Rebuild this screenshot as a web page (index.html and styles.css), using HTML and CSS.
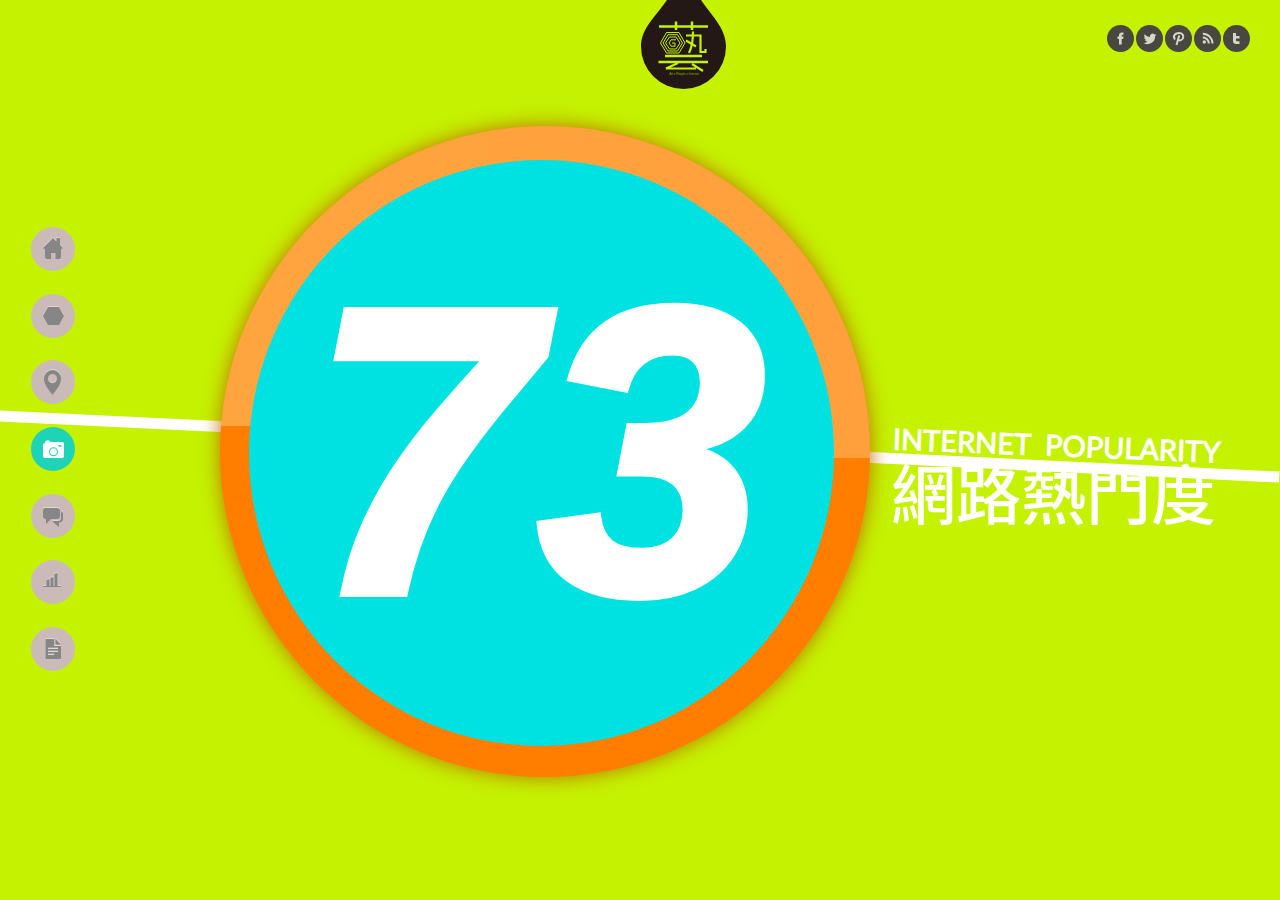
FILE: index.html
```html
<!DOCTYPE html>
<html lang="zh-Hant">
<head>
<meta charset="utf-8">
<title>網路熱門度</title>
<link rel="stylesheet" href="styles.css">
</head>
<body>
<div class="page">
  <div class="slash"></div>
  <header class="top">
    <a class="logo" href="#" aria-label="藝">
      <svg viewBox="0 0 86 90">
        <path d="M26 0H60C70 15 85 28 85 46.500A42.500 42.500 0 0 1 0 46.500C0 28 16 15 26 0Z" fill="#231815"/>
        <g fill="none" stroke="#c4f200" stroke-width="2.200">
          <path d="M18 26.500H67M35 21.500V30M51 21.500V30" stroke-width="2.500"/>
          <path d="M24 56H61M17.500 62H67" stroke-width="2.500"/>
          <path d="M37 63L25 68.500H55M51 64L62 71"/>
          <path d="M45 35.500H59.500V52H64.500V49M52 31.500C52 42 51 47 48 53M45 40.500L55 46.500"/>
        </g>
        <g fill="none" stroke="#c4f200" stroke-width="1">
          <path d="M19.500 43L25.500 32.500H38L44 43L38 53H25.500Z"/>
          <path d="M22 43L27 34.700H36.500L41.500 43L36.500 51H27Z"/>
          <path d="M24.500 43L28.500 37H35L39 43L35 49H28.500Z"/>
          <path d="M35 39.800H30L28 43L30 46.200H34V43H31"/>
        </g>
      </svg>
      <span class="tagline">Art x People x Internet</span>
    </a>
    <nav class="social" aria-label="Social">
      <a href="#" aria-label="Facebook"><svg viewBox="0 0 27 27"><path d="M12 19.500V14H10.500V11.500H12V10.500C12 8.500 13 7.500 15 7.500H16.500V9.800H15.500Q14.700 9.800 14.700 10.600V11.500H16.500L16.200 14H14.700V19.500Z"/></svg></a>
      <a href="#" aria-label="Twitter"><svg viewBox="0 0 24 24" class="bird"><path d="M23 5a9 9 0 0 1-2.500.700 4.500 4.500 0 0 0 2-2.500 9 9 0 0 1-2.900 1.100 4.500 4.500 0 0 0-7.700 4.100A12.800 12.800 0 0 1 2.600 3.700a4.500 4.500 0 0 0 1.400 6 4.500 4.500 0 0 1-2-.600 4.500 4.500 0 0 0 3.600 4.500 4.500 4.500 0 0 1-2 .1 4.500 4.500 0 0 0 4.200 3.100A9 9 0 0 1 1 18.700 12.800 12.800 0 0 0 20.700 7.300 9 9 0 0 0 23 5z"/></svg></a>
      <a href="#" aria-label="Pinterest"><svg viewBox="0 0 27 27"><path class="stroke" d="M10 14.500C7.500 11 10 8 14 8C17.500 8 19 10.500 18 13C17 16 13.500 16 13 14M14.200 10.500L11.500 20"/></svg></a>
      <a href="#" aria-label="RSS"><svg viewBox="0 0 27 27"><circle cx="10.300" cy="17" r="1.700"/><path class="stroke" d="M8.800 12.500A6 6 0 0 1 14.800 18.500M8.800 8.800A9.700 9.700 0 0 1 18.500 18.500"/></svg></a>
      <a href="#" aria-label="Tumblr"><svg viewBox="0 0 27 27"><path d="M10 8H13V11H16.500V13.500H13V15.300Q13 16.300 14 16.300H16.500V19H13Q10 19 10 16Z"/></svg></a>
    </nav>
  </header>
  <main class="stage">
    <nav class="side" aria-label="Sections">
      <a href="#" aria-label="Home"><svg viewBox="0 0 44 44"><path d="M12 21L22 11L25.500 14.500V11H29V18L32 21L30 22.500V30Q30 32 28 32H24.500V26H20V32H16Q14 32 14 30V22.500Z"/></svg></a>
      <a href="#" aria-label="Shape"><svg viewBox="0 0 44 44"><path d="M12 22L17 13H28L33 22L28 31H17Z"/></svg></a>
      <a href="#" aria-label="Places"><svg viewBox="0 0 44 44"><path fill-rule="evenodd" d="M21.500 10A8.500 8.500 0 0 1 30 19C30 25 25 30 21.500 35C18 30 13 25 13 19A8.500 8.500 0 0 1 21.500 10ZM21.500 14A4.500 4.500 0 1 0 21.500 23A4.500 4.500 0 1 0 21.500 14Z"/></svg></a>
      <a href="#" class="active" aria-label="Photos"><svg viewBox="0 0 44 44"><path fill-rule="evenodd" d="M14 16C14 12.500 19 12.500 19 15H31Q33 15 33 17V29Q33 31 31 31H14Q12 31 12 29V18Q12 16 14 16ZM22.500 20.200A4.500 4.500 0 1 0 22.500 29.200A4.500 4.500 0 1 0 22.500 20.200ZM26.500 18.200H30.500V19.800H28Z"/><circle cx="22.500" cy="24.700" r="3.400"/></svg></a>
      <a href="#" aria-label="Comments"><svg viewBox="0 0 44 44"><path d="M14 14H26Q29 14 29 17V22Q29 25 26 25H20L15 30V25Q12 25 12 22V17Q12 14 14 14ZM30 17Q32 18 32 20V25Q32 28 28 28.500V33L22 28V27H27Q30 27 30 23Z"/></svg></a>
      <a href="#" aria-label="Statistics"><svg viewBox="0 0 44 44"><path d="M12 26H15.500V20L18.500 19V26H19.500V18L22.500 17V26H23.500V14L26.500 13V26H30V27H12Z"/></svg></a>
      <a href="#" aria-label="Documents"><svg viewBox="0 0 44 44"><path fill-rule="evenodd" d="M15.500 12H23V19H30V31Q30 32 29 32H15.500Q14.500 32 14.500 31V13Q14.500 12 15.500 12ZM24.500 12L30 17.500H24.500ZM17 20.500V22H27V20.500ZM17 23.500V25H27V23.500ZM17 26.500V28H23V26.500Z"/></svg></a>
    </nav>
    <section class="score">
      <div class="ring"><div class="dial"><strong>73</strong></div></div>
      <h1 class="title"><span class="en">INTERNET&nbsp; POPULARITY</span><span class="zh">網路熱門度</span></h1>
    </section>
  </main>
</div>
</body>
</html>
```
FILE: styles.css
```css
* { box-sizing: border-box; }
body { margin: 0; background: #c4f200; font-family: "Liberation Sans", Arial, sans-serif; }
svg { display: block; }
.page { position: relative; min-height: 100vh; overflow: hidden; }
.slash { position: absolute; left: -1px; right: 0; top: 441px; height: 11px; background: #fff; transform: rotate(2.730deg); }
.top { display: grid; grid-template-columns: 641fr 86px 553fr; height: 126px; position: relative; }
.logo { grid-column: 2; position: relative; height: 90px; }
.tagline { position: absolute; left: 0; right: 0; top: 72px; font-size: 3px; line-height: 4px; text-align: center; color: #8fae10; }
.social { justify-self: end; display: flex; gap: 2px; padding: 25px 30px 0 0; }
.social a { width: 27px; height: 27px; border-radius: 50%; background: #484840; display: grid; place-items: center; }
.social svg { width: 27px; fill: #d6d6c8; }
.social .bird { width: 14px; }
.social .stroke { fill: none; stroke: #d6d6c8; stroke-width: 2; }
.stage { display: flex; align-items: flex-start; position: relative; padding-left: 31px; }
.side { display: flex; flex-direction: column; justify-content: space-between; height: 444px; margin-top: 101px; }
.side a { display: block; width: 44px; height: 44px; border-radius: 50%; background: #cabbb9; }
.side svg { fill: #868686; filter: drop-shadow(0 -1px 0 #e0d6d4); }
.side .active { background: #1fd3b8; }
.side .active svg { fill: #fff; filter: none; }
.score { display: flex; align-items: flex-start; margin-left: 145px; }
.ring {
  flex: none;
  width: 650px;
  height: 651px;
  padding: 34px 0 0 29px;
  border-radius: 50%;
  background:
    linear-gradient(90deg, #ffa53f, #ffa23d) 0 0 / 50% 300px no-repeat,
    linear-gradient(90deg, #ffa23d, #ffa03c) 100% 0 / 50% 332px no-repeat,
    #ff7e00;
  box-shadow: 0 0 20px #c07000;
}
.dial { width: 585px; height: 586px; border-radius: 50%; background: #00e2e2; display: grid; place-items: center; color: #fff; }
.dial strong { font-size: 410px; line-height: 582px; font-style: italic; margin: 0 8px 4px 0; -webkit-text-stroke: 8px #fff; }
.title { margin: 302px 0 0 21px; color: #fff; white-space: nowrap; font-weight: 500; }
.title span { display: block; }
.en { width: fit-content; padding: 4px 0 0 2px; font: 29px/26px Lato, sans-serif; transform: rotate(2.300deg); -webkit-text-stroke: 1px #fff; }
.zh { font: 500 65px/66px "Noto Sans CJK TC", sans-serif; }
```
